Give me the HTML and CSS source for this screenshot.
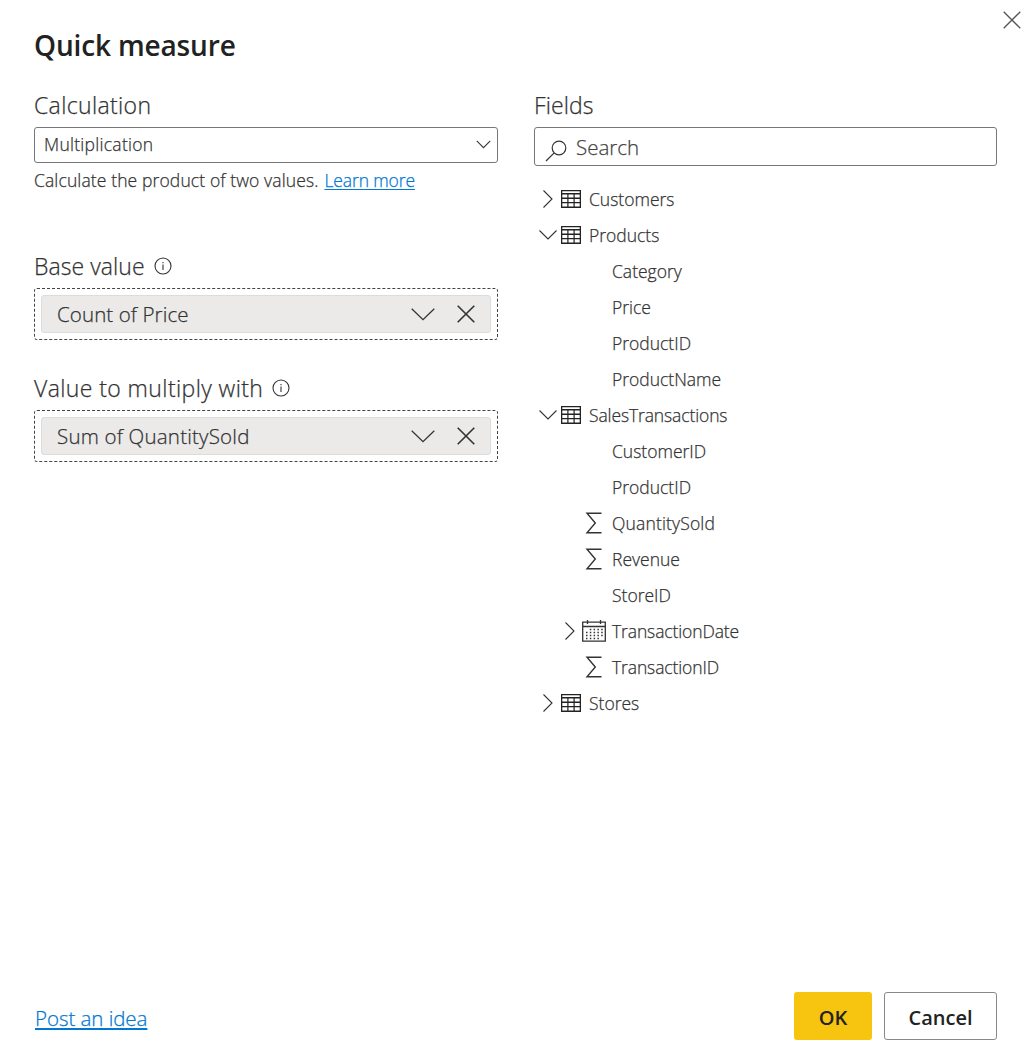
FILE: index.html
```html
<!DOCTYPE html>
<html lang="en">
<head>
<meta charset="utf-8">
<title>Quick measure</title>
<link rel="stylesheet" href="styles.css">
</head>
<body>
<svg class="defs" aria-hidden="true">
  <symbol id="right" viewBox="0 0 24 24"><path d="M7.500 3.500 16 12l-8.500 8.500"/></symbol>
  <symbol id="down" viewBox="0 0 24 24"><path d="M3.500 7.500 12 16l8.500-8.500"/></symbol>
  <symbol id="table" viewBox="0 0 20 18"><path d="M0 0h20v18H0z M1.300 1.200h17.400v1.900H1.300z M1.300 4.500h5v3.100h-5z M7.500 4.500h5v3.100h-5z M13.700 4.500h5v3.100h-5z M1.300 8.900h5v3h-5z M7.500 8.900h5v3h-5z M13.700 8.900h5v3h-5z M1.300 13.200h5v3.200h-5z M7.500 13.200h5v3.200h-5z M13.700 13.200h5v3.200h-5z"/></symbol>
  <symbol id="sum" viewBox="0 0 18 22"><path d="M16.500 1.200H2l8.300 9.800L2 20.800h14.500"/></symbol>
  <symbol id="calendar" viewBox="0 0 24 22"><path d="M.7 2.200h22.600v19H.7zM.7 6.500h22.600M5.500 0v4M18.500 0v4"/><path class="dots" d="M7.800 9.500h13M4 12.500h17M4 15.500h17M4 18.500h13"/></symbol>
  <symbol id="info" viewBox="0 0 18 18"><circle cx="9" cy="9" r="8"/><path d="M9 7.500v5.500M9 5v1.300"/></symbol>
  <symbol id="cross" viewBox="0 0 18 18"><path d="m.7.700 16.600 16.600M17.300.700.700 17.300"/></symbol>
</svg>
<main class="dialog">
  <button class="close" aria-label="Close"><svg class="icon"><use href="#cross"/></svg></button>
  <h1 class="title"><span>Quick measure</span></h1>
  <div class="columns">
    <section class="left">
      <h2 class="label calculation">Calculation</h2>
      <div class="select"><span>Multiplication</span><svg class="icon"><use href="#down"/></svg></div>
      <p class="hint"><span>Calculate the product of two values.</span><a class="link" href="#">Learn more</a></p>
      <h2 class="label base">Base value<svg class="icon info"><use href="#info"/></svg></h2>
      <div class="well"><div class="chip"><span class="chip-price">Count of Price</span><svg class="icon arrow" viewBox="0 0 24 13"><path d="M.700.700 12 11.700 23.300.700"/></svg><svg class="icon remove"><use href="#cross"/></svg></div></div>
      <h2 class="label multiply">Value to multiply with<svg class="icon info"><use href="#info"/></svg></h2>
      <div class="well"><div class="chip"><span class="chip-sold">Sum of QuantitySold</span><svg class="icon arrow" viewBox="0 0 24 13"><path d="M.700.700 12 11.700 23.300.700"/></svg><svg class="icon remove"><use href="#cross"/></svg></div></div>
    </section>
    <section class="right">
      <h2 class="label fields">Fields</h2>
      <div class="search"><svg class="icon" viewBox="0 0 22 22"><circle cx="14" cy="8" r="6.800"/><path d="M9.200 12.800 1 21"/></svg><span>Search</span></div>
      <ul class="tree">
        <li class="table"><svg class="icon chevron"><use href="#right"/></svg><svg class="grid"><use href="#table"/></svg><span>Customers</span></li>
        <li class="table"><svg class="icon chevron"><use href="#down"/></svg><svg class="grid"><use href="#table"/></svg><span>Products</span></li>
        <li class="field"><span>Category</span></li>
        <li class="field"><span>Price</span></li>
        <li class="field"><span>ProductID</span></li>
        <li class="field"><span>ProductName</span></li>
        <li class="table"><svg class="icon chevron"><use href="#down"/></svg><svg class="grid"><use href="#table"/></svg><span class="transactions">SalesTransactions</span></li>
        <li class="field"><span>CustomerID</span></li>
        <li class="field"><span>ProductID</span></li>
        <li class="measure"><svg class="icon sum"><use href="#sum"/></svg><span class="quantity">QuantitySold</span></li>
        <li class="measure"><svg class="icon sum"><use href="#sum"/></svg><span>Revenue</span></li>
        <li class="field"><span>StoreID</span></li>
        <li class="date"><svg class="icon chevron"><use href="#right"/></svg><svg class="icon calendar"><use href="#calendar"/></svg><span class="transactions">TransactionDate</span></li>
        <li class="measure"><svg class="icon sum"><use href="#sum"/></svg><span class="transactions">TransactionID</span></li>
        <li class="table"><svg class="icon chevron"><use href="#right"/></svg><svg class="grid"><use href="#table"/></svg><span>Stores</span></li>
      </ul>
    </section>
  </div>
  <footer class="footer">
    <a class="link idea" href="#">Post an idea</a>
    <button class="button primary">OK</button>
    <button class="button secondary">Cancel</button>
  </footer>
</main>
</body>
</html>
```
FILE: styles.css
```css
* { box-sizing: border-box; }
body { margin: 0; background: #fff; color: #333; font-family: "Open Sans", "Noto Sans", sans-serif; font-weight: 300; -webkit-text-stroke: .25px; }
h1, h2, p, ul { margin: 0; padding: 0; font-weight: 300; }
button { font-family: inherit; padding: 0; }
.defs { position: absolute; width: 0; height: 0; }
.dialog { position: relative; height: 1047px; padding: 24px 35px 7px 34px; display: flex; flex-direction: column; }
.icon { fill: none; stroke: #333; stroke-width: 1.3; flex: none; }
.close { position: absolute; top: 11px; right: 11px; width: 18px; height: 18px; border: 0; background: none; display: flex; }
.close .icon { width: 18px; height: 18px; stroke: #555; }
.title { height: 42px; line-height: 42px; font-size: 28px; font-weight: 600; letter-spacing: -.15px; color: #222; white-space: nowrap; -webkit-text-stroke: 0; }
.columns { display: grid; grid-template-columns: 464px 463px; gap: 36px; padding-top: 22px; flex: 1; }
.label { display: flex; align-items: center; height: 34px; font-size: 23px; line-height: 34px; white-space: nowrap; }
.info { width: 18px; height: 18px; margin-left: 9px; stroke-width: 1.1; }
.calculation, .fields { margin-bottom: 5px; }
.calculation { letter-spacing: .35px; }
.fields { letter-spacing: .1px; }
.select { display: flex; align-items: center; justify-content: space-between; height: 36px; border: 1px solid #777; border-radius: 3px; padding: 0 4px 2px 9px; font-size: 17.500px; line-height: 32px; letter-spacing: .28px; }
.select .icon { width: 19px; height: 19px; }
.hint { height: 36px; line-height: 35px; display: flex; gap: 6px; font-size: 17.500px; white-space: nowrap; letter-spacing: .12px; }
.hint .link { letter-spacing: -.13px; }
.link { color: #0078d4; text-decoration: underline; text-decoration-thickness: 1px; text-underline-offset: 2px; }
.base { margin-top: 50px; margin-bottom: 5px; letter-spacing: .05px; }
.well { height: 52px; border: 1px dashed #444; border-radius: 3px; padding: 6px; }
.chip { height: 38px; display: flex; align-items: center; background: #ebeae9; border: 1px solid #dcdcdc; border-radius: 3px; padding: 0 15.500px 0 15px; font-size: 20.500px; }
.chip span { flex: 1; white-space: nowrap; }
.chip-price { letter-spacing: .1px; }
.chip-sold { letter-spacing: .2px; }
.arrow { width: 24px; height: 13px; margin-right: 22px; }
.remove { width: 18px; height: 18px; stroke-width: 1.600; }
.multiply { margin-top: 31px; margin-bottom: 5px; letter-spacing: .4px; }
.search { display: flex; align-items: center; height: 39px; border: 1px solid #777; border-radius: 3px; padding-left: 10px; gap: 9px; font-size: 20.500px; color: #444; }
.search .icon { width: 22px; height: 22px; margin-top: 8px; stroke-width: 1.200; }
.search span { padding-top: 1px; }
.tree { list-style: none; padding-top: 15px; }
.tree li { height: 36px; display: flex; align-items: center; font-size: 17.500px; white-space: nowrap; }
.transactions { letter-spacing: -.12px; }
.quantity { letter-spacing: .15px; }
.chevron { width: 24px; height: 24px; stroke-width: 1.100; }
.table { padding-left: 2px; }
.grid { width: 20px; height: 18px; margin: 0 8px 0 1px; fill: #222; fill-rule: evenodd; }
.field { padding-left: 78px; }
.measure { padding-left: 51px; }
.sum { width: 18px; height: 22px; margin-right: 9px; stroke-width: 1.400; }
.date { padding-left: 24px; }
.calendar { width: 24px; height: 22px; margin-right: 6px; }
.dots { stroke-width: 1.400; stroke-dasharray: 1.500 2.300; }
.footer { display: flex; align-items: center; gap: 12px; height: 48px; }
.idea { margin-right: auto; margin-left: 1px; padding-top: 4px; font-size: 20.500px; text-decoration-thickness: 2px; letter-spacing: -.05px; }
.button { height: 48px; border-radius: 3px; font-size: 20px; font-weight: 600; color: #222; padding-top: 2px; -webkit-text-stroke: 0; }
.primary { width: 78px; border: 0; background: #f7c40f; }
.secondary { width: 113px; border: 1px solid #888; background: #fff; }
```
